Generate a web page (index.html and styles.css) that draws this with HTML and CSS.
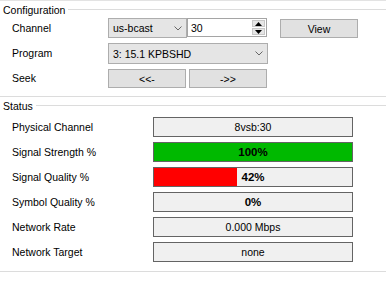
FILE: index.html
```html
<!DOCTYPE html>
<html lang="en">
<head>
<meta charset="UTF-8">
<title>Tuner</title>
<link rel="stylesheet" href="styles.css">
</head>
<body>
<div class="group config">
  <div class="legend">Configuration</div>
  <div class="rows">
    <div class="row">
      <span class="label">Channel</span>
      <div class="combo small">
        <span>us-bcast</span>
        <svg class="chev" width="8" height="5" viewBox="0 0 8 5"><path d="M0.5 0.5 L4 4 L7.5 0.5" fill="none" stroke="#666" stroke-width="1"/></svg>
      </div>
      <div class="numeric">
        <span>30</span>
        <div class="spin">
          <div class="spin-btn"><svg width="7" height="4" viewBox="0 0 7 4"><path d="M0 4 L3.5 0 L7 4 Z" fill="#000"/></svg></div>
          <div class="spin-btn"><svg width="7" height="4" viewBox="0 0 7 4"><path d="M0 0 L3.5 4 L7 0 Z" fill="#000"/></svg></div>
        </div>
      </div>
      <button class="btn view">View</button>
    </div>
    <div class="row">
      <span class="label">Program</span>
      <div class="combo wide">
        <span>3: 15.1 KPBSHD</span>
        <svg class="chev" width="8" height="5" viewBox="0 0 8 5"><path d="M0.5 0.5 L4 4 L7.5 0.5" fill="none" stroke="#666" stroke-width="1"/></svg>
      </div>
    </div>
    <div class="row">
      <span class="label">Seek</span>
      <div class="seek">
        <button class="btn">&lt;&lt;-</button>
        <button class="btn">-&gt;&gt;</button>
      </div>
    </div>
  </div>
</div>
<div class="group status">
  <div class="legend">Status</div>
  <div class="fields">
    <div class="field">
      <span class="label">Physical Channel</span>
      <div class="box">8vsb:30</div>
    </div>
    <div class="field">
      <span class="label">Signal Strength %</span>
      <div class="box bold"><div class="fill green" style="width: 100%"></div><span>100%</span></div>
    </div>
    <div class="field">
      <span class="label">Signal Quality %</span>
      <div class="box bold"><div class="fill red" style="width: 42%"></div><span>42%</span></div>
    </div>
    <div class="field">
      <span class="label">Symbol Quality %</span>
      <div class="box bold"><span>0%</span></div>
    </div>
    <div class="field">
      <span class="label">Network Rate</span>
      <div class="box">0.000 Mbps</div>
    </div>
    <div class="field">
      <span class="label">Network Target</span>
      <div class="box">none</div>
    </div>
  </div>
</div>
</body>
</html>
```

FILE: styles.css
```css
body {
  margin: 0;
  background: #fff;
  color: #000;
  font-family: "Liberation Sans", Arial, sans-serif;
  font-size: 10.5px;
  border-top: 1px solid #e3e3e3;
}

.group {
  border-bottom: 1px solid #dcdcdc;
}

.legend {
  display: flex;
  align-items: center;
  gap: 3px;
  height: 17px;
  padding-left: 3px;
}
.legend::after {
  content: '';
  flex: 1;
  border-top: 1px solid #dcdcdc;
}

.rows {
  display: flex;
  flex-direction: column;
  gap: 4px;
  padding-bottom: 7px;
}
.row {
  display: flex;
  align-items: flex-start;
  height: 21px;
}
.row .label {
  width: 96px;
  padding-left: 12px;
  line-height: 20px;
}

.combo {
  box-sizing: border-box;
  height: 20px;
  display: flex;
  align-items: center;
  justify-content: space-between;
  padding: 0 4px 0 4px;
  background: #e5e5e5;
  border: 1px solid #adadad;
}
.combo.small { width: 79px; }
.combo.wide { width: 160px; height: 21px; }

.numeric {
  box-sizing: border-box;
  width: 80px;
  height: 19px;
  display: flex;
  align-items: center;
  justify-content: space-between;
  padding: 0 1px 0 3px;
  border: 1px solid #a5a5a5;
  background: #fff;
}
.spin {
  display: flex;
  flex-direction: column;
  width: 13px;
  height: 15px;
  gap: 1px;
}
.spin-btn {
  flex: 1;
  display: flex;
  align-items: center;
  justify-content: center;
  background: #e6e6e6;
  border: 1px solid #c8c8c8;
  box-sizing: border-box;
}

.btn {
  box-sizing: border-box;
  height: 19px;
  width: 78px;
  padding: 0;
  font-family: inherit;
  font-size: inherit;
  color: #000;
  background: #e1e1e1;
  border: 1px solid #adadad;
}
.view {
  margin-left: 13px;
  margin-top: 1px;
}
.seek {
  display: flex;
  gap: 3px;
  padding-top: 1px;
}

.fields {
  display: flex;
  flex-direction: column;
  gap: 5px;
  padding: 3px 0 9px;
}
.field {
  display: flex;
  align-items: center;
  height: 20px;
}
.field .label {
  width: 141px;
  padding-left: 12px;
}

.box {
  position: relative;
  box-sizing: border-box;
  width: 200px;
  height: 20px;
  line-height: 18px;
  text-align: center;
  background: #f0f0f0;
  border: 1px solid #646464;
}
.box.bold {
  font-weight: bold;
  font-size: 11.5px;
}
.box span {
  position: relative;
}
.fill {
  position: absolute;
  left: 0;
  top: 0;
  height: 100%;
}
.green { background: #00b900; }
.red { background: #ff0000; }
```
